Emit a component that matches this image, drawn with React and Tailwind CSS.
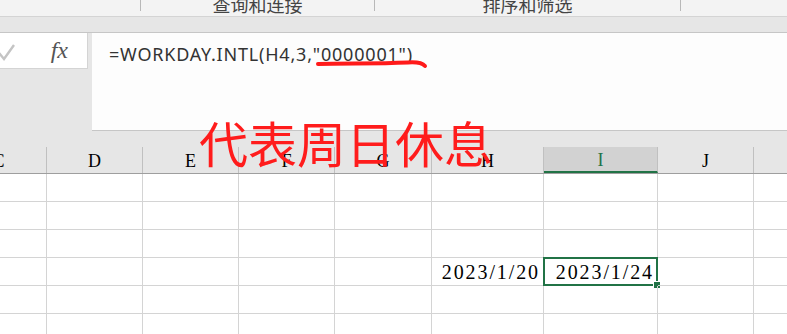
import React from 'react';

const cols = [
  { name: 'C', w: 'w-[96px] -ml-[49px]' },
  { name: 'D', w: 'w-[96px]' },
  { name: 'E', w: 'w-[96px]' },
  { name: 'F', w: 'w-[96px]' },
  { name: 'G', w: 'w-[97px]' },
  { name: 'H', w: 'w-[112px]' },
  { name: 'I', w: 'w-[114px]' },
  { name: 'J', w: 'w-[96px]' },
  { name: 'K', w: 'w-[96px]' },
];

const rows = [1, 2, 3, 4, 5, 6];

const serif = { fontFamily: '"Liberation Serif", "DejaVu Serif", serif' };

function Cell({ col, row }) {
  const selected = col === 'I' && row === 4;
  let text = null;
  if (row === 4 && col === 'H') text = '2023/1/20';
  if (row === 4 && col === 'I') text = '2023/1/24';
  return (
    <div className={`relative h-[28px] shrink-0 border-r border-b border-[#d4d4d4] flex items-center justify-end pr-[3px] text-[20px] tracking-[1.9px] text-black ${cols.find(c => c.name === col).w}`} style={serif}>
      {text}
      {selected && (
        <div className="absolute -top-px -left-px -right-px -bottom-px border-2 border-[#217346]">
          <div className="absolute -right-[5px] -bottom-[5px] w-[8px] h-[8px] bg-[#217346] border border-white" />
        </div>
      )}
    </div>
  );
}

export default function App() {
  return (
    <div className="relative w-[787px] h-[334px] overflow-hidden bg-white flex flex-col" style={{ fontFamily: '"Noto Sans", "Noto Sans CJK SC", sans-serif' }}>
      {/* ribbon group labels */}
      <div className="h-[17px] shrink-0 bg-[#f3f3f3] border-b border-[#d4d4d4] flex items-start overflow-hidden text-[18px] text-[#444]" style={{ fontFamily: '"Noto Sans CJK SC", sans-serif' }}>
        <div className="w-[140px] shrink-0" />
        <div className="w-px h-[11px] bg-[#b8b8b8] shrink-0" />
        <div className="w-[233px] shrink-0 flex justify-center -mt-[6px] leading-[20px]">查询和连接</div>
        <div className="w-px h-[11px] bg-[#b8b8b8] shrink-0" />
        <div className="w-[305px] shrink-0 flex justify-center -mt-[6px] leading-[20px]">排序和筛选</div>
        <div className="w-px h-[11px] bg-[#b8b8b8] shrink-0" />
        <div className="flex-1" />
      </div>

      <div className="h-[16px] shrink-0 bg-[#e6e6e6] border-b border-[#c6c6c6]" />

      {/* formula bar */}
      <div className="h-[98px] shrink-0 bg-[#e6e6e6] flex gap-[4px]">
        <div className="w-[88px] h-[36px] shrink-0 bg-white border-r border-b border-[#d4d4d4] flex items-center justify-between pr-[19px]">
          <svg width="16" height="18" viewBox="0 0 16 18" className="-ml-px mt-[2px]">
            <path d="M0 10 L5 16 L15 2" fill="none" stroke="#c4c4c4" strokeWidth="2.4" />
          </svg>
          <span className="italic text-[24px] text-[#555] -mt-[2px]" style={serif}>fx</span>
        </div>
        <div className="flex-1 bg-[#fdfdfd] border-b border-[#c6c6c6] pl-[17px] pt-[3px] text-[18px] tracking-[0.8px] text-[#333] leading-[36px]">
          =WORKDAY.INTL(H4,3,"0000001")
        </div>
      </div>

      <div className="h-[16px] shrink-0 bg-[#e6e6e6]" />

      {/* column headers */}
      <div className="h-[27px] shrink-0 flex bg-[#e6e6e6] border-b border-[#9e9e9e]">
        {cols.map(c => (
          <div
            key={c.name}
            className={`${c.w} shrink-0 h-full flex items-center justify-center pt-[3px] text-[18px] border-r ${c.name === 'I' ? 'bg-[#d2d2d2] text-[#217346] border-[#c0c0c0] border-b-2 border-b-[#217346]' : 'text-black border-[#c0c0c0]'}`}
            style={serif}
          >
            {c.name}
          </div>
        ))}
      </div>

      {/* grid */}
      <div className="flex flex-col">
        {rows.map(r => (
          <div key={r} className="flex">
            {cols.map(c => (
              <Cell key={c.name} col={c.name} row={r} />
            ))}
          </div>
        ))}
      </div>

      {/* annotation overlay */}
      <svg className="absolute left-[314px] top-[58px]" width="116" height="14" viewBox="0 0 116 14">
        <path d="M4 6 C30 5, 60 6, 94 4.5 C102 4, 108 4.5, 111 8" fill="none" stroke="#ff1a1a" strokeWidth="4" strokeLinecap="round" />
      </svg>
      <div className="absolute left-[199px] top-[117px] text-[49px] leading-none text-[#ff1c1c] whitespace-nowrap" style={{ fontFamily: '"Noto Sans CJK SC", sans-serif' }}>
        代表周日休息
      </div>
    </div>
  );
}
